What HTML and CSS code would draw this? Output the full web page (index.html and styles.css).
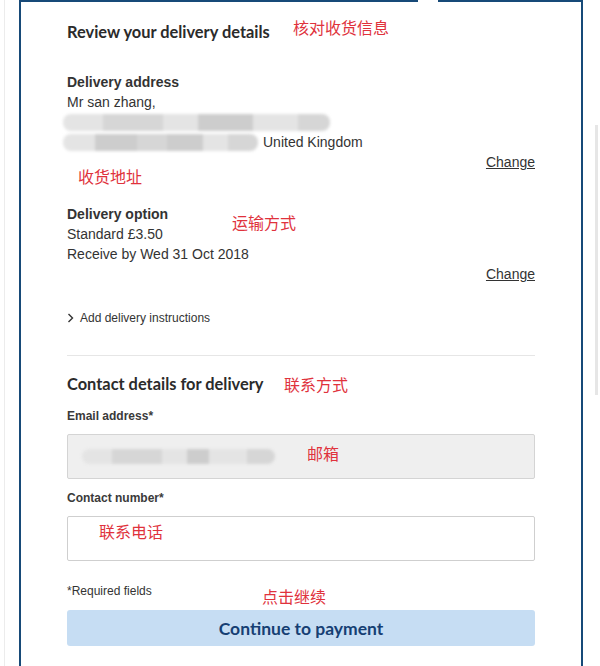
FILE: index.html
```html
<html>
<head>
<title>Review your delivery details</title>
<link rel="stylesheet" href="styles.css">
</head>
<body>

<div class="screen">
    <div class="page">
        <div class="card">
            <h2 class="title">Review your delivery details</h2>

            <div class="block">
                <div class="label">Delivery address</div>
                <div class="line">Mr san zhang,</div>
                <div class="line">
                    <span class="blur">
                        <i class="b1" style="width:40px"></i><i class="b2" style="width:60px"></i><i class="b1" style="width:35px"></i><i class="b3" style="width:55px"></i><i class="b1" style="width:45px"></i><i class="b2" style="width:32px"></i>
                    </span>
                </div>
                <div class="line">
                    <span class="blur short">
                        <i class="b1" style="width:32px"></i><i class="b3" style="width:42px"></i><i class="b2" style="width:30px"></i><i class="b3" style="width:36px"></i><i class="b1" style="width:25px"></i><i class="b2" style="width:30px"></i>
                    </span>
                    United Kingdom
                </div>
                <div class="change"><a href="#">Change</a></div>
            </div>

            <div class="block option">
                <div class="label">Delivery option</div>
                <div class="line">Standard &pound;3.50</div>
                <div class="line">Receive by Wed 31 Oct 2018</div>
                <div class="change"><a href="#">Change</a></div>
            </div>

            <div class="instructions">
                <svg width="7" height="10" viewBox="0 0 7 10"><polyline points="1.5,1 5.5,5 1.5,9" fill="none" stroke="#333" stroke-width="1.4"/></svg>
                <span>Add delivery instructions</span>
            </div>

            <hr class="divider">

            <h2 class="title contact">Contact details for delivery</h2>

            <div class="field">
                <div class="field-label">Email address*</div>
                <div class="input readonly">
                    <span class="blur mail">
                        <i class="b1" style="width:30px"></i><i class="b2" style="width:50px"></i><i class="b1" style="width:25px"></i><i class="b3" style="width:22px"></i><i class="b1" style="width:38px"></i><i class="b2" style="width:28px"></i>
                    </span>
                </div>
            </div>

            <div class="field">
                <div class="field-label">Contact number*</div>
                <div class="input"></div>
            </div>

            <div class="required">*Required fields</div>

            <button class="continue">Continue to payment</button>
        </div>
    </div>

    <span class="note" style="left:293px; top:17px">核对收货信息</span>
    <span class="note" style="left:78px; top:166px">收货地址</span>
    <span class="note" style="left:232px; top:212px">运输方式</span>
    <span class="note" style="left:284px; top:374px">联系方式</span>
    <span class="note" style="left:307px; top:443px">邮箱</span>
    <span class="note" style="left:99px; top:521px">联系电话</span>
    <span class="note" style="left:262px; top:586px">点击继续</span>

    <div class="scroll-thumb"></div>
</div>

</body>
</html>
```

FILE: styles.css
```css
body {
    margin: 0;
    background: #fff;
    font-family: "Liberation Sans", Arial, sans-serif;
    font-size: 14px;
    color: #333;
}

.screen {
    position: relative;
    width: 600px;
    height: 666px;
    overflow: hidden;
}

.page {
    margin-left: 4px;
    padding-left: 14px;
    border-left: 1px solid #ececec;
    height: 100%;
}

.card {
    position: relative;
    width: 468px;
    padding: 20px 46px 40px 46px;
    border: 2px solid #174a78;
    border-bottom: none;
    min-height: 700px;
}

/* little notch in the top border */
.card:before {
    content: "";
    position: absolute;
    top: -2px;
    left: 397px;
    width: 20px;
    height: 2px;
    background: #fff;
}

.title {
    margin: 0;
    font-family: Lato, "Open Sans", sans-serif;
    font-size: 16.4px;
    font-weight: 700;
    line-height: 20px;
    color: #2b2b2b;
}

.block {
    margin-top: 30px;
}

.option {
    margin-top: 32px;
}

.label {
    font-weight: bold;
    line-height: 20px;
}

.line {
    min-height: 20px;
    line-height: 20px;
    display: flex;
    align-items: center;
}

.change {
    text-align: right;
    line-height: 20px;
}

.change a {
    color: #333;
}

.blur {
    display: inline-flex;
    height: 17px;
    margin-left: -4px;
    filter: blur(1.5px);
    border-radius: 8px;
    overflow: hidden;
}

.blur.short {
    margin-right: 5px;
}

.blur i {
    display: block;
    height: 100%;
}

.b1 { background: #e4e4e4; }
.b2 { background: #d6d6d6; }
.b3 { background: #cdcdcd; }

.instructions {
    margin-top: 24px;
    display: flex;
    align-items: center;
    gap: 6px;
    font-size: 12px;
    line-height: 20px;
}

.divider {
    border: none;
    border-top: 1px solid #e6e6e6;
    margin: 27px 0 0 0;
}

.contact {
    margin-top: 18px;
}

.field {
    margin-top: 12px;
}

.field + .field {
    margin-top: 9px;
}

.field-label {
    font-size: 12px;
    font-weight: bold;
    line-height: 20px;
    color: #3a3a3a;
}

.input {
    margin-top: 8px;
    height: 43px;
    border: 1px solid #cfcfcf;
    border-radius: 2px;
    background: #fff;
    display: flex;
    align-items: center;
    padding-left: 14px;
}

.input.readonly {
    background: #efefef;
    border-color: #d4d4d4;
}

.blur.mail {
    height: 15px;
    margin-left: 0;
}

.required {
    margin-top: 20px;
    font-size: 12px;
    line-height: 20px;
}

.continue {
    display: block;
    width: 100%;
    margin-top: 9px;
    height: 36px;
    border: none;
    border-radius: 3px;
    background: #c6ddf3;
    color: #163f73;
    font-family: Lato, "Open Sans", sans-serif;
    font-size: 17.5px;
    font-weight: 700;
}

.note {
    position: absolute;
    font-family: "Noto Sans CJK SC", sans-serif;
    font-size: 16px;
    line-height: 20px;
    color: #e0323c;
}

.scroll-thumb {
    position: absolute;
    left: 595px;
    top: 125px;
    width: 3px;
    height: 270px;
    background: #e6e6e6;
}
```
